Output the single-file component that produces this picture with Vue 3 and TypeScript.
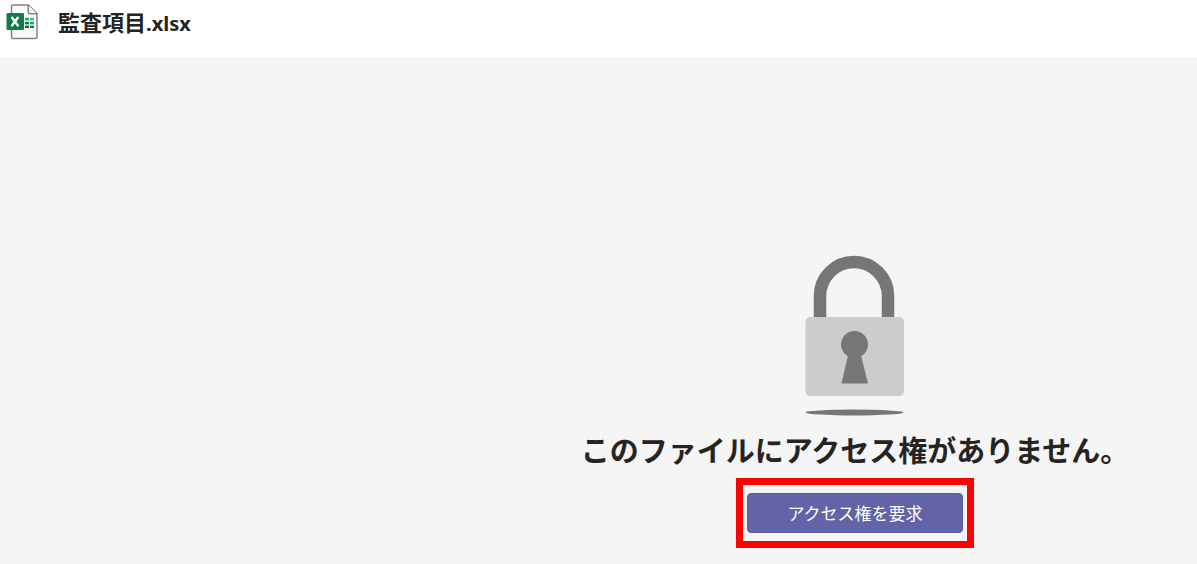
<script setup lang="ts">
import { ref } from 'vue'

const file = { stem: '監査項目', extension: '.xlsx' }
const requested = ref(false)

function requestAccess(): void {
  requested.value = true
}
</script>

<template>
  <div class="page">
    <header class="file-bar">
      <svg class="file-icon" viewBox="0 0 32 36" aria-hidden="true">
        <path d="M7 1H22.5L31 9.5V33Q31 34.5 29.5 34.5H7Q5.5 34.5 5.5 33V2.5Q5.5 1 7 1Z" fill="#fbfafa" stroke="#858382" stroke-width="1.5" />
        <path d="M22.3 1V8.2Q22.3 9.7 23.8 9.7H31" fill="#fff" stroke="#858382" stroke-width="1.5" />
        <path d="M19 13.8h4v2.6h-4z" fill="#21a366" />
        <path d="M24 13.8h4v2.6h-4z" fill="#33c481" />
        <path d="M19 17.8h4v2.6h-4z" fill="#107c41" />
        <path d="M24 17.8h4v2.6h-4z" fill="#21a366" />
        <path d="M19 21.7h4v2.3h-4z" fill="#185c37" />
        <path d="M24 21.7h4v2.3h-4z" fill="#107c41" />
        <rect x="0.5" y="9" width="17.5" height="17" rx="1.3" fill="#107c41" />
        <path d="M5.6 13L12.4 22.3M12.3 13L5.5 22.3" stroke="#fff" stroke-width="2.4" />
      </svg>
      <h1 class="file-name">{{ file.stem }}<span class="extension">{{ file.extension }}</span></h1>
    </header>

    <main class="viewer">
      <section class="notice">
        <svg class="lock" viewBox="0 0 100 162" aria-hidden="true">
          <path d="M15 64V41a34 34 0 0 1 68 0V64" fill="none" stroke="#767676" stroke-width="12.5" />
          <rect x="0.5" y="62" width="98.5" height="79" rx="5" fill="#cdccca" />
          <path d="M36.5 128.5L42.8 101.2A13.5 13.5 0 1 1 56.2 101.2L63 128.5Z" fill="#767676" />
          <ellipse cx="49.5" cy="157.5" rx="49" ry="3" fill="#767676" />
        </svg>
        <h2 class="message">このファイルにアクセス権がありません。</h2>
        <div class="highlight">
          <button class="request" type="button" :aria-pressed="requested" @click="requestAccess">アクセス権を要求</button>
        </div>
      </section>
    </main>
  </div>
</template>

<style>
body {
  margin: 0;
  background: #f5f5f5;
}
</style>

<style scoped>
.page {
  display: flex;
  flex-direction: column;
  min-height: 100vh;
  color: #252423;
  background: #f5f5f5;
  font-family: "Noto Sans CJK JP", sans-serif;
}

.file-bar {
  display: flex;
  align-items: flex-start;
  gap: 20px;
  box-sizing: border-box;
  height: 57px;
  padding: 4px 6px;
  background: #fff;
}

.file-icon {
  flex: none;
  width: 32px;
  height: 36px;
}

.file-name {
  margin: 0;
  font-size: 22px;
  line-height: 34px;
  font-weight: 700;
}

.extension {
  font-family: "Noto Sans", sans-serif;
  font-size: 20px;
}

.viewer {
  flex: 1;
  display: grid;
  grid-template-columns: 3fr 4fr;
  padding: 198px 0 16px;
}

.notice {
  grid-column: 2;
  display: flex;
  flex-direction: column;
  align-items: center;
}

.lock {
  width: 100px;
  height: 162px;
}

.message {
  margin: 12px 0 9px;
  font-size: 29px;
  line-height: 40px;
  font-weight: 700;
  white-space: nowrap;
}

.highlight {
  padding: 8px 4px;
  border: 7px solid #f00;
}

.request {
  display: block;
  width: 216px;
  height: 40px;
  padding: 0;
  border: 1px solid #5b5c9f;
  border-radius: 4px;
  background: #6264a7;
  color: #fff;
  font-family: inherit;
  font-size: 17px;
  font-weight: 400;
  line-height: 24px;
  cursor: pointer;
}
</style>
